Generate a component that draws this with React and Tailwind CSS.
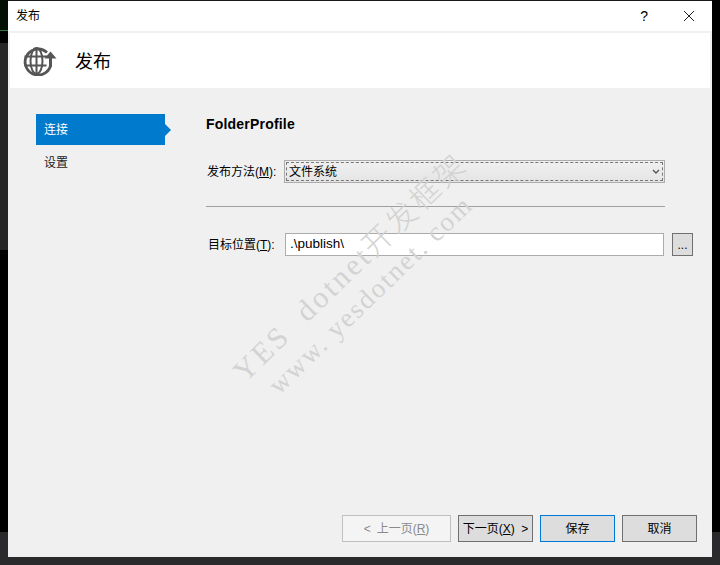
import React from "react";

const cjk = "font-['Liberation_Sans','Noto_Sans_CJK_SC',sans-serif]";

function GlobeIcon() {
  return (
    <svg width="34" height="30" viewBox="0 0 34 30" fill="none" stroke="#555" strokeWidth="2.8">
      <path d="M27.5 20 A13 13 0 1 1 24 6.5" />
      <ellipse cx="13.5" cy="15" rx="6" ry="13" strokeWidth="2" />
      <path d="M13.5 2v26M1.5 10.5h23M1.5 19.5h22" strokeWidth="2" />
      <path d="M27.5 21V10" strokeWidth="3" />
      <path d="M21.5 12.5l6-7 6 7z" fill="#555" stroke="none" />
    </svg>
  );
}

function Button({ children, className }) {
  return (
    <div className={`flex h-[27px] items-center justify-center whitespace-nowrap border text-[12px] ${className}`}>
      {children}
    </div>
  );
}

function Watermark() {
  return (
    <div className="pointer-events-none absolute left-0 top-0 h-full w-full font-['Liberation_Serif','Noto_Sans_CJK_SC',serif] font-light text-[#d3d3d3]">
      <div className="absolute left-[238px] top-[361px] origin-left -rotate-[44deg] whitespace-nowrap text-[30px] leading-none tracking-[3px]">
        YES&nbsp;&nbsp;dotnet开发框架
      </div>
      <div className="absolute left-[273px] top-[376px] origin-left -rotate-[44deg] whitespace-nowrap text-[27px] leading-none tracking-[2px]">
        www. yesdotnet. com
      </div>
    </div>
  );
}

export default function App() {
  return (
    <div className={`relative h-[565px] w-[720px] overflow-hidden bg-[#2a2a2c] ${cjk}`}>
      {/* desktop behind the dialog */}
      <div className="absolute left-0 top-0 flex h-[532px] w-[8px] flex-col bg-black">
        <div className="h-[30px] bg-[#030e05]" />
        <div className="h-px bg-[#2e7d32]" />
        <div className="mt-[12px] h-[207px] bg-[#252526]" />
      </div>
      <div className="absolute right-0 top-0 h-[532px] w-[8px] bg-black" />

      <div className="relative mx-[8px] flex h-[557px] w-[704px] flex-col border-t border-[#1a1a1a] bg-[#f0f0f0] text-black">
        {/* title bar */}
        <div className="flex h-[30px] shrink-0 items-center bg-white pl-[8px] text-[12px]">
          <span className="flex-1">发布</span>
          <span className="mr-[35px] text-[14px] leading-none">?</span>
          <svg className="mr-[17px]" width="12" height="12" viewBox="0 0 12 12" stroke="#222" strokeWidth="1">
            <path d="M1 1l10 10M11 1L1 11" />
          </svg>
        </div>

        {/* header */}
        <div className="ml-[2px] mr-[2px] mt-[2px] flex h-[55px] shrink-0 items-center bg-white pl-[13px]">
          <GlobeIcon />
          <span className="ml-[18px] mt-[4px] text-[18px]">发布</span>
        </div>

        <div className="flex flex-1">
          {/* side nav */}
          <div className="ml-[28px] mt-[26px] w-[129px] shrink-0 text-[12px]">
            <div className="relative flex h-[31px] items-center bg-[#007acc] pl-[8px] text-white">
              连接
              <div className="absolute left-full top-[10px] border-y-[6px] border-l-[6px] border-y-transparent border-l-[#007acc]" />
            </div>
            <div className="mt-[2px] flex h-[31px] items-center pl-[8px] text-[#222]">设置</div>
          </div>

          {/* form */}
          <div className="ml-[41px] mt-[27px] w-[459px] text-[12px]">
            <div className="text-[14px] font-bold leading-[18px] tracking-[0.2px]">FolderProfile</div>

            <div className="mt-[27px] flex h-[23px] items-center">
              <span className="w-[78px] shrink-0 whitespace-nowrap pl-px">
                发布方法(<span className="underline">M</span>):
              </span>
              <div className="flex h-[23px] flex-1 items-center border border-[#acacac] bg-linear-to-b from-[#f0f0f0] to-[#e5e5e5] p-px">
                <div className="flex h-full w-full items-center justify-between border border-dashed border-[#777] pl-[2px] pr-[2px]">
                  <span>文件系统</span>
                  <svg width="8" height="6" viewBox="0 0 8 6" fill="none" stroke="#555" strokeWidth="1.4">
                    <path d="M1 1l3 3 3-3" />
                  </svg>
                </div>
              </div>
            </div>

            <div className="mt-[23px] h-px bg-[#a0a0a0]" />

            <div className="mt-[26px] flex h-[23px] items-center">
              <span className="w-[79px] shrink-0 whitespace-nowrap pl-[2px]">
                目标位置(<span className="underline">T</span>):
              </span>
              <div className="flex h-[23px] w-[379px] shrink-0 items-center border border-[#acacac] bg-white pl-[4px] text-[13.5px]">
                .\publish\
              </div>
              <div className="ml-[8px] flex h-[23px] w-[21px] shrink-0 items-center justify-center border border-[#707070] bg-[#dddddd] text-[12px] leading-none">
                ...
              </div>
            </div>
          </div>
        </div>

        {/* footer buttons */}
        <div className="mb-[15px] mr-[15px] flex justify-end gap-[7px]">
          <Button className="w-[109px] border-[#bfbfbf] bg-[#f4f4f4] text-[#8a8a8a]">
            &lt;<span className="ml-[6px]">上一页(<span className="underline">R</span>)</span>
          </Button>
          <Button className="w-[75px] border-[#707070] bg-[#dddddd]">
            下一页(<span className="underline">X</span>)&nbsp;&nbsp;&gt;
          </Button>
          <Button className="w-[75px] border-[#0078d7] bg-[#dddddd]">保存</Button>
          <Button className="w-[75px] border-[#707070] bg-[#dddddd]">取消</Button>
        </div>
      </div>

      <Watermark />
    </div>
  );
}
